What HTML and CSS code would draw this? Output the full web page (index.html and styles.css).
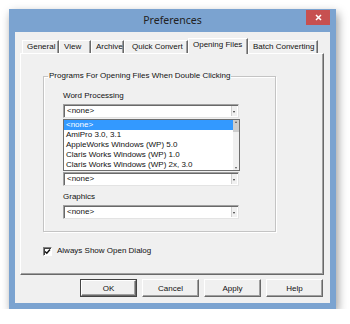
FILE: index.html
```html
<!DOCTYPE html>
<html>
<head>
    <title>Preferences</title>
    <link rel="stylesheet" href="styles.css">
</head>
<body>
    <div class="window">
        <div class="titlebar">
            <div class="title">Preferences</div>
            <div class="close">
                <svg width="7" height="7" viewBox="0 0 7 7"><path d="M1 1L6 6M6 1L1 6" stroke="#fff" stroke-width="1.5"/></svg>
            </div>
        </div>
        <div class="client">
            <div class="tabs">
                <div class="tab tab-general">General</div>
                <div class="tab tab-view">View</div>
                <div class="tab tab-archive">Archive</div>
                <div class="tab tab-quick">Quick Convert</div>
                <div class="tab tab-opening active">Opening Files</div>
                <div class="tab tab-batch">Batch Converting</div>
            </div>
            <div class="panel">
                <fieldset class="group">
                    <legend>Programs For Opening Files When Double Clicking</legend>
                    <div class="group-body">
                        <div class="field-label">Word Processing</div>
                        <div class="combo"><span class="combo-value">&lt;none&gt;</span><span class="combo-btn"></span></div>
                        <div class="listbox">
                            <div class="list-items">
                                <div class="list-item selected">&lt;none&gt;</div>
                                <div class="list-item">AmiPro 3.0, 3.1</div>
                                <div class="list-item">AppleWorks Windows (WP) 5.0</div>
                                <div class="list-item">Claris Works Windows (WP) 1.0</div>
                                <div class="list-item">Claris Works Windows (WP) 2x, 3.0</div>
                            </div>
                            <div class="scrollbar">
                                <span class="sb-thumb"><span class="sb-arrow up"></span></span>
                                <span class="sb-arrow down"></span>
                            </div>
                        </div>
                        <div class="combo combo-after-list"><span class="combo-value">&lt;none&gt;</span><span class="combo-btn"></span></div>
                        <div class="field-label graphics-label">Graphics</div>
                        <div class="combo"><span class="combo-value">&lt;none&gt;</span><span class="combo-btn"></span></div>
                    </div>
                </fieldset>
                <div class="check-row">
                    <span class="checkbox">
                        <svg width="7" height="7" viewBox="0 0 7 7"><path d="M1 3.5L2.8 5.3L6 1.5" fill="none" stroke="#111" stroke-width="1.4"/></svg>
                    </span>
                    Always Show Open Dialog
                </div>
            </div>
            <div class="buttons">
                <button class="btn default">OK</button>
                <button class="btn">Cancel</button>
                <button class="btn">Apply</button>
                <button class="btn">Help</button>
            </div>
        </div>
    </div>
</body>
</html>
```

FILE: styles.css
```css
body {
    margin: 0;
    padding: 0;
    background: #fff;
    font-family: "Liberation Sans", Arial, sans-serif;
    font-size: 8px;
    line-height: 10px;
    color: #111;
}
.window {
    box-sizing: border-box;
    margin: 9px 0 0 9px;
    width: 327px;
    height: 300px;
    padding: 0 6px 6px 6px;
    background: #7ba3d0;
    box-shadow: 2px 4px 9px rgba(0, 0, 0, 0.4);
}
.titlebar {
    display: flex;
    height: 23px;
}
.title {
    flex: 1;
    padding-left: 24px;
    text-align: center;
    font-family: "Noto Sans", "Open Sans", sans-serif;
    font-size: 10.5px;
    line-height: 23px;
    color: #222;
}
.close {
    display: flex;
    align-items: center;
    justify-content: center;
    width: 24px;
    height: 15px;
    margin-top: 1px;
    background: #c75050;
}
.client {
    box-sizing: border-box;
    height: 271px;
    padding: 6px 6px 0 5px;
    background: #f0f0f0;
}

/* tabs */
.tabs {
    display: flex;
    align-items: flex-end;
    height: 15px;
    padding-left: 2px;
}
.tab {
    box-sizing: border-box;
    height: 13px;
    padding-left: 4px;
    border-top: 1px solid #fff;
    border-left: 1px solid #fff;
    border-right: 1px solid #696969;
    box-shadow: inset -1px 0 #a0a0a0;
    line-height: 11px;
    white-space: nowrap;
}
.tab-general { width: 37px; }
.tab-view { width: 32px; }
.tab-archive { width: 33px; }
.tab-quick { width: 64px; padding-left: 7px; }
.tab-opening { width: 60px; }
.tab-batch { width: 70px; }
.tab.active {
    position: relative;
    z-index: 1;
    height: 16px;
    margin-bottom: -1px;
    background: #f0f0f0;
    line-height: 12px;
}

/* tab page */
.panel {
    box-sizing: border-box;
    width: 304px;
    height: 222px;
    padding: 17px 0 0 22px;
    border-top: 1px solid #fff;
    border-left: 1px solid #fff;
    border-right: 1px solid #696969;
    border-bottom: 1px solid #696969;
    box-shadow: inset -1px -1px #a0a0a0;
}
.group {
    box-sizing: border-box;
    width: 233px;
    height: 161px;
    margin: 0;
    padding: 10px 0 0 0;
    border: 1px solid #c4c4c4;
    box-shadow: 1px 1px 0 #fff, inset 1px 1px 0 #fff;
    min-width: 0;
}
.group legend {
    margin-left: 4px;
    padding: 0 1px;
    line-height: 10px;
}
.group-body {
    padding-left: 19px;
}
.field-label {
    margin-bottom: 3px;
}
.graphics-label {
    margin-top: 6px;
}
.combo {
    box-sizing: border-box;
    display: flex;
    width: 176px;
    height: 14px;
    background: #fff;
    border-top: 1px solid #a0a0a0;
    border-left: 1px solid #a0a0a0;
    border-right: 1px solid #e3e3e3;
    border-bottom: 1px solid #e3e3e3;
    box-shadow: inset 1px 1px #696969;
}
.combo-after-list {
    margin-top: 1px;
}
.combo-value {
    flex: 1;
    padding: 1px 0 0 3px;
    line-height: 10px;
}
.combo-btn {
    position: relative;
    width: 5px;
    margin: 1px 1px 1px 0;
    background: #f0f0f0;
    border-left: 1px solid #d0d0d0;
}
.combo-btn::after {
    content: "";
    position: absolute;
    left: 1px;
    top: 5px;
    border-left: 1.5px solid transparent;
    border-right: 1.5px solid transparent;
    border-top: 2px solid #333;
}

/* dropped list */
.listbox {
    box-sizing: border-box;
    display: flex;
    width: 177px;
    height: 52px;
    margin-top: 1px;
    background: #fff;
    border: 1px solid #6e6e6e;
}
.list-items {
    flex: 1;
}
.list-item {
    height: 10px;
    padding-left: 2px;
    line-height: 10px;
    white-space: nowrap;
}
.list-item.selected {
    background: #3399ff;
    color: #fff;
}
.scrollbar {
    display: flex;
    flex-direction: column;
    justify-content: space-between;
    width: 6px;
    background: #f0f0f0;
}
.sb-thumb {
    display: block;
    height: 12px;
    background: #cdcdcd;
}
.sb-arrow {
    display: block;
    width: 0;
    margin: 1px auto 0;
    border-left: 1.5px solid transparent;
    border-right: 1.5px solid transparent;
}
.sb-arrow.up {
    border-bottom: 2px solid #555;
}
.sb-arrow.down {
    margin-bottom: 1px;
    border-top: 2px solid #555;
}

/* checkbox */
.check-row {
    display: flex;
    align-items: center;
    gap: 5px;
    margin-top: 14px;
}
.checkbox {
    box-sizing: border-box;
    display: flex;
    align-items: center;
    justify-content: center;
    width: 9px;
    height: 9px;
    background: #fff;
    border-top: 1px solid #808080;
    border-left: 1px solid #808080;
    border-right: 1px solid #fff;
    border-bottom: 1px solid #fff;
    box-shadow: inset 1px 1px #404040;
}

/* dialog buttons */
.buttons {
    display: flex;
    justify-content: flex-end;
    gap: 5px;
    width: 303px;
    margin-top: 4px;
}
.btn {
    box-sizing: border-box;
    width: 57px;
    height: 18px;
    padding: 0;
    font-family: "Liberation Sans", Arial, sans-serif;
    font-size: 8px;
    background: #f0f0f0;
    border-top: 1px solid #fff;
    border-left: 1px solid #fff;
    border-right: 1px solid #696969;
    border-bottom: 1px solid #696969;
    box-shadow: inset -1px -1px #a0a0a0;
    color: #111;
}
.btn.default {
    outline: 1px solid #444;
    outline-offset: -1px;
    border-width: 2px;
    border-color: #fff #696969 #696969 #fff;
}
```
